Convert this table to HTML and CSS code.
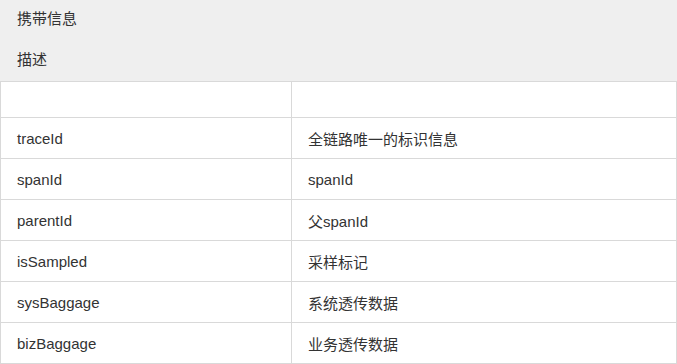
FILE: index.html
```html
<!DOCTYPE html>
<html lang="zh">
<head>
<meta charset="utf-8">
<link rel="stylesheet" href="styles.css">
</head>
<body>
<div class="head">
  <div class="head-cell">携带信息</div>
  <div class="head-cell">描述</div>
</div>
<table class="grid">
  <tbody>
    <tr class="empty"><td></td><td></td></tr>
    <tr><td>traceId</td><td>全链路唯一的标识信息</td></tr>
    <tr><td>spanId</td><td>spanId</td></tr>
    <tr><td>parentId</td><td>父spanId</td></tr>
    <tr><td>isSampled</td><td>采样标记</td></tr>
    <tr><td>sysBaggage</td><td>系统透传数据</td></tr>
    <tr><td>bizBaggage</td><td>业务透传数据</td></tr>
  </tbody>
</table>
</body>
</html>
```
FILE: styles.css
```css
html, body {
  margin: 0;
  padding: 0;
  background: #ffffff;
}
body {
  font-family: "Liberation Sans", "Noto Sans CJK SC", sans-serif;
  font-size: 15px;
  color: #333333;
  width: 677px;
}
.head {
  background: #efefef;
  height: 81px;
  display: flex;
  flex-direction: column;
}
.head-cell {
  height: 41px;
  line-height: 37px;
  padding-left: 17px;
}
.grid {
  width: 677px;
  border-collapse: collapse;
  table-layout: fixed;
}
.grid td {
  border: 1px solid #d9d9d9;
  height: 41px;
  padding: 0 0 0 16px;
  box-sizing: border-box;
  vertical-align: middle;
}
.grid td:first-child {
  width: 291px;
}
.grid tr.empty td {
  height: 36px;
}
```
